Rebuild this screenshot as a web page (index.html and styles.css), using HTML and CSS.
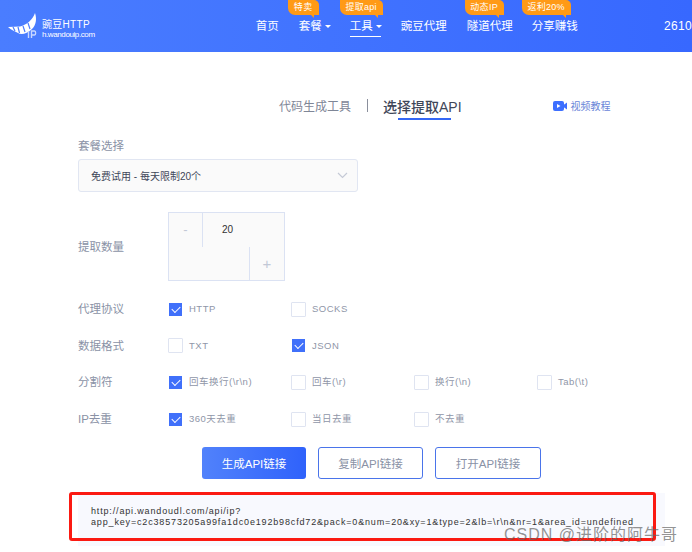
FILE: index.html
```html
<!DOCTYPE html>
<html lang="zh-CN">
<head>
    <meta charset="UTF-8">
    <meta name="viewport" content="width=device-width, initial-scale=1.0">
    <title>豌豆HTTP - 提取API</title>
    <link rel="stylesheet" href="styles.css">
</head>
<body>
    <header class="topbar">
        <div class="logo">
            <svg class="logo-mark" width="30" height="26" viewBox="0 0 30 26">
                <path d="M0 14 L12 13.5 C19 12 25 6 27 0 C29 6 28 12 24 16 C19 21 13 22 10 20 C7 18.5 3 17 0 14 Z" fill="#fff"/>
                <path d="M5 14 L7 18 M10 14 L11.5 20 M15 13 L17 19 M20 10 L22 16" stroke="#4a7cff" stroke-width="1.2"/>
                <path d="M20.5 18 V25 M23.5 25 V18 H26.5 C28 18 28 22 26.5 22 H23.5" fill="none" stroke="#c9d8ff" stroke-width="1.4"/>
            </svg>
            <div class="logo-text">
                <div class="logo-name">豌豆HTTP</div>
                <div class="logo-url">h.wandouip.com</div>
            </div>
        </div>
        <nav class="nav">
            <a class="nav-item nav-home">首页</a>
            <a class="nav-item nav-plan">套餐<i class="caret"></i><span class="tag tag-plan">特卖</span></a>
            <a class="nav-item nav-tool active">工具<i class="caret"></i><span class="tag tag-tool">提取api</span></a>
            <a class="nav-item nav-proxy">豌豆代理</a>
            <a class="nav-item nav-tunnel">隧道代理<span class="tag tag-tunnel">动态IP</span></a>
            <a class="nav-item nav-share">分享赚钱<span class="tag tag-share">返利20%</span></a>
        </nav>
        <div class="phone">2610</div>
    </header>

    <main class="content">
        <div class="tabs">
            <span class="tab">代码生成工具</span>
            <span class="tab-sep"></span>
            <span class="tab tab-active">选择提取API</span>
            <span class="video">
                <svg width="14" height="10" viewBox="0 0 14 10">
                    <rect x="0" y="0" width="11" height="10" rx="2" fill="#3d6fff"/>
                    <path d="M10.5 4 L14 1.5 V8.5 L10.5 6 Z" fill="#3d6fff"/>
                    <path d="M4 3 L7.5 5 L4 7 Z" fill="#fff"/>
                </svg>
                视频教程
            </span>
        </div>

        <div class="field-label">套餐选择</div>
        <div class="select">
            <span>免费试用 - 每天限制20个</span>
            <svg width="11" height="7" viewBox="0 0 11 7"><path d="M1 1 L5.5 5.5 L10 1" fill="none" stroke="#c5cad6" stroke-width="1.2"/></svg>
        </div>

        <div class="qty-row">
            <div class="row-label">提取数量</div>
            <div class="stepper">
                <div class="stepper-top">
                    <span class="minus">-</span>
                    <span class="qty">20</span>
                </div>
                <div class="stepper-bottom">
                    <span class="plus">+</span>
                </div>
            </div>
        </div>

        <div class="opt-row">
            <div class="row-label">代理协议</div>
            <label class="opt"><i class="box on"></i>HTTP</label>
            <label class="opt"><i class="box"></i>SOCKS</label>
        </div>
        <div class="opt-row">
            <div class="row-label">数据格式</div>
            <label class="opt"><i class="box"></i>TXT</label>
            <label class="opt"><i class="box on"></i>JSON</label>
        </div>
        <div class="opt-row">
            <div class="row-label">分割符</div>
            <label class="opt"><i class="box on"></i>回车换行(\r\n)</label>
            <label class="opt"><i class="box"></i>回车(\r)</label>
            <label class="opt"><i class="box"></i>换行(\n)</label>
            <label class="opt"><i class="box"></i>Tab(\t)</label>
        </div>
        <div class="opt-row">
            <div class="row-label">IP去重</div>
            <label class="opt"><i class="box on"></i>360天去重</label>
            <label class="opt"><i class="box"></i>当日去重</label>
            <label class="opt"><i class="box"></i>不去重</label>
        </div>

        <div class="actions">
            <button class="btn btn-primary">生成API链接</button>
            <button class="btn">复制API链接</button>
            <button class="btn">打开API链接</button>
        </div>

        <div class="result">http://api.wandoudl.com/api/ip?<br>app_key=c2c38573205a99fa1dc0e192b98cfd72&amp;pack=0&amp;num=20&amp;xy=1&amp;type=2&amp;lb=\r\n&amp;nr=1&amp;area_id=undefined</div>
    </main>

    <div class="red-mark"></div>
    <div class="watermark">CSDN @进阶的阿牛哥</div>
</body>
</html>
```

FILE: styles.css
```css
* {
    box-sizing: border-box;
}
html, body {
    height: 552px;
    overflow: hidden;
}
body {
    margin: 0;
    position: relative;
    background: #fff;
    font-family: "Liberation Sans", "Noto Sans CJK SC", sans-serif;
    color: #8a92a6;
}
.topbar {
    height: 52px;
    display: flex;
    background: linear-gradient(90deg, #4a7dff, #3768ff);
    color: #fff;
    white-space: nowrap;
}
.logo {
    display: flex;
    align-items: flex-start;
    width: 256px;
    padding: 13px 0 0 8px;
}
.logo-mark {
    flex: none;
}
.logo-text {
    margin: 6px 0 0 4px;
}
.logo-name {
    font-size: 10px;
    line-height: 11px;
    letter-spacing: 0.3px;
}
.logo-url {
    font-size: 8px;
    line-height: 9px;
    letter-spacing: -0.4px;
}
.nav {
    display: flex;
    width: 400px;
}
.nav-item {
    position: relative;
    display: block;
    height: 39px;
    padding-top: 17px;
    font-size: 11.5px;
    line-height: 18px;
}
.nav-home { width: 43px; }
.nav-plan { width: 51px; }
.nav-tool { width: 51px; }
.nav-proxy { width: 66px; }
.nav-tunnel { width: 65px; }
.nav-share { width: 60px; }
.nav-tool.active::after {
    content: "";
    position: absolute;
    left: 0;
    top: 36px;
    width: 31px;
    height: 1px;
    background: #fff;
}
.caret {
    display: inline-block;
    margin: 0 0 2px 3px;
    border: 3px solid transparent;
    border-top: 3px solid #fff;
    border-bottom: 0;
}
.tag {
    position: absolute;
    top: 0;
    height: 15px;
    background: #ff9a16;
    border-radius: 0 5px 0 7px;
    font-size: 9px;
    line-height: 14px;
    letter-spacing: 0.3px;
    text-align: center;
}
.tag::after {
    content: "";
    position: absolute;
    right: 5px;
    bottom: -3px;
    border-top: 3px solid #ff9a16;
    border-left: 3px solid transparent;
}
.tag-plan { left: -11px; width: 31px; }
.tag-tool { left: -10px; width: 43px; }
.tag-tunnel { left: -2px; width: 39px; }
.tag-share { left: -10px; width: 49px; }
.phone {
    padding: 17px 0 0 9px;
    font-size: 12px;
    line-height: 18px;
    letter-spacing: 0.3px;
}

.content {
    padding-left: 78px;
}
.tabs {
    position: relative;
    display: flex;
    align-items: center;
    height: 20px;
    margin-top: 45px;
    padding-left: 201px;
    white-space: nowrap;
}
.tab {
    font-size: 12px;
    line-height: 20px;
    color: #7f8697;
}
.tab-sep {
    width: 1px;
    height: 13px;
    margin: -3px 15px 0 16px;
    background: #8a8f9c;
}
.tab-active {
    position: relative;
    font-size: 14px;
    font-weight: 500;
    color: #3f4759;
}
.tab-active::after {
    content: "";
    position: absolute;
    left: 15px;
    bottom: -3px;
    width: 53px;
    height: 2px;
    background: #3467f5;
}
.video {
    display: flex;
    align-items: center;
    gap: 4px;
    margin: -3px 0 0 91px;
    font-size: 10px;
    color: #6a86d8;
}

.field-label {
    margin-top: 19px;
    font-size: 11.5px;
    line-height: 20px;
}
.select {
    display: flex;
    align-items: center;
    justify-content: space-between;
    width: 280px;
    height: 33px;
    margin-top: 3px;
    padding: 0 9px 0 12px;
    background: #fafafa;
    border: 1px solid #e1e6f2;
    border-radius: 3px;
    font-size: 10px;
    color: #3f4759;
}
.qty-row {
    display: flex;
    align-items: center;
    height: 69px;
    margin-top: 20px;
}
.row-label {
    flex: none;
    width: 90px;
    font-size: 11.5px;
    line-height: 20px;
}
.stepper {
    width: 117px;
    height: 69px;
    background: #fafafa;
    border: 1px solid #dbe2f3;
}
.stepper-top, .stepper-bottom {
    display: flex;
    height: 33.5px;
}
.stepper-bottom {
    justify-content: flex-end;
}
.minus, .plus {
    width: 35px;
    text-align: center;
    color: #c2c8d6;
    font-size: 13px;
    line-height: 33px;
}
.minus {
    width: 34px;
    border-right: 1px solid #dbe2f3;
}
.plus {
    border-left: 1px solid #dbe2f3;
    font-size: 15px;
}
.qty {
    padding-left: 19px;
    font-size: 10px;
    line-height: 33px;
    color: #333;
}
.opt-row {
    display: flex;
    align-items: center;
    height: 36.6px;
}
.qty-row + .opt-row {
    margin-top: 10px;
}
.opt {
    display: flex;
    align-items: center;
    gap: 6px;
    width: 123px;
    font-size: 9.5px;
    line-height: 14px;
    letter-spacing: 0.5px;
    color: #8f96a8;
    white-space: nowrap;
}
.box {
    display: block;
    position: relative;
    flex: none;
    width: 15px;
    height: 15px;
    background: #fff;
    border: 1px solid #dfe4f1;
    border-radius: 1px;
}
.box.on {
    background: #4070fa;
    background-clip: padding-box;
    border-color: #fff;
}
.box.on::after {
    content: "";
    position: absolute;
    left: 2.5px;
    top: 3px;
    width: 7px;
    height: 4px;
    border-left: 1.5px solid #fff;
    border-bottom: 1.5px solid #fff;
    transform: rotate(-45deg);
}
.actions {
    display: flex;
    gap: 12px;
    margin: 10px 0 0 124px;
}
.btn {
    width: 105px;
    height: 32px;
    padding: 0;
    background: #fff;
    border: 1px solid #4a74ea;
    border-radius: 3px;
    font-family: inherit;
    font-size: 11.5px;
    color: #8a92a6;
}
.btn + .btn + .btn {
    width: 106px;
}
.btn-primary {
    width: 104px;
    border: 0;
    background: linear-gradient(90deg, #5182fb, #2f62fb);
    color: #fff;
}
.result {
    width: 587px;
    height: 53px;
    margin-top: 14px;
    padding: 13px 0 0 13px;
    background: #f8f9fe;
    font-size: 9px;
    line-height: 11px;
    letter-spacing: 0.84px;
    color: #333;
    white-space: nowrap;
}
.red-mark {
    position: absolute;
    left: 69px;
    top: 492px;
    width: 587px;
    height: 49px;
    border: 3px solid #fb1a12;
    border-radius: 3px;
}
.watermark {
    position: absolute;
    left: 504px;
    top: 526px;
    font-size: 16px;
    line-height: 18px;
    letter-spacing: 1px;
    color: rgba(100, 100, 100, 0.7);
    white-space: nowrap;
}
```
